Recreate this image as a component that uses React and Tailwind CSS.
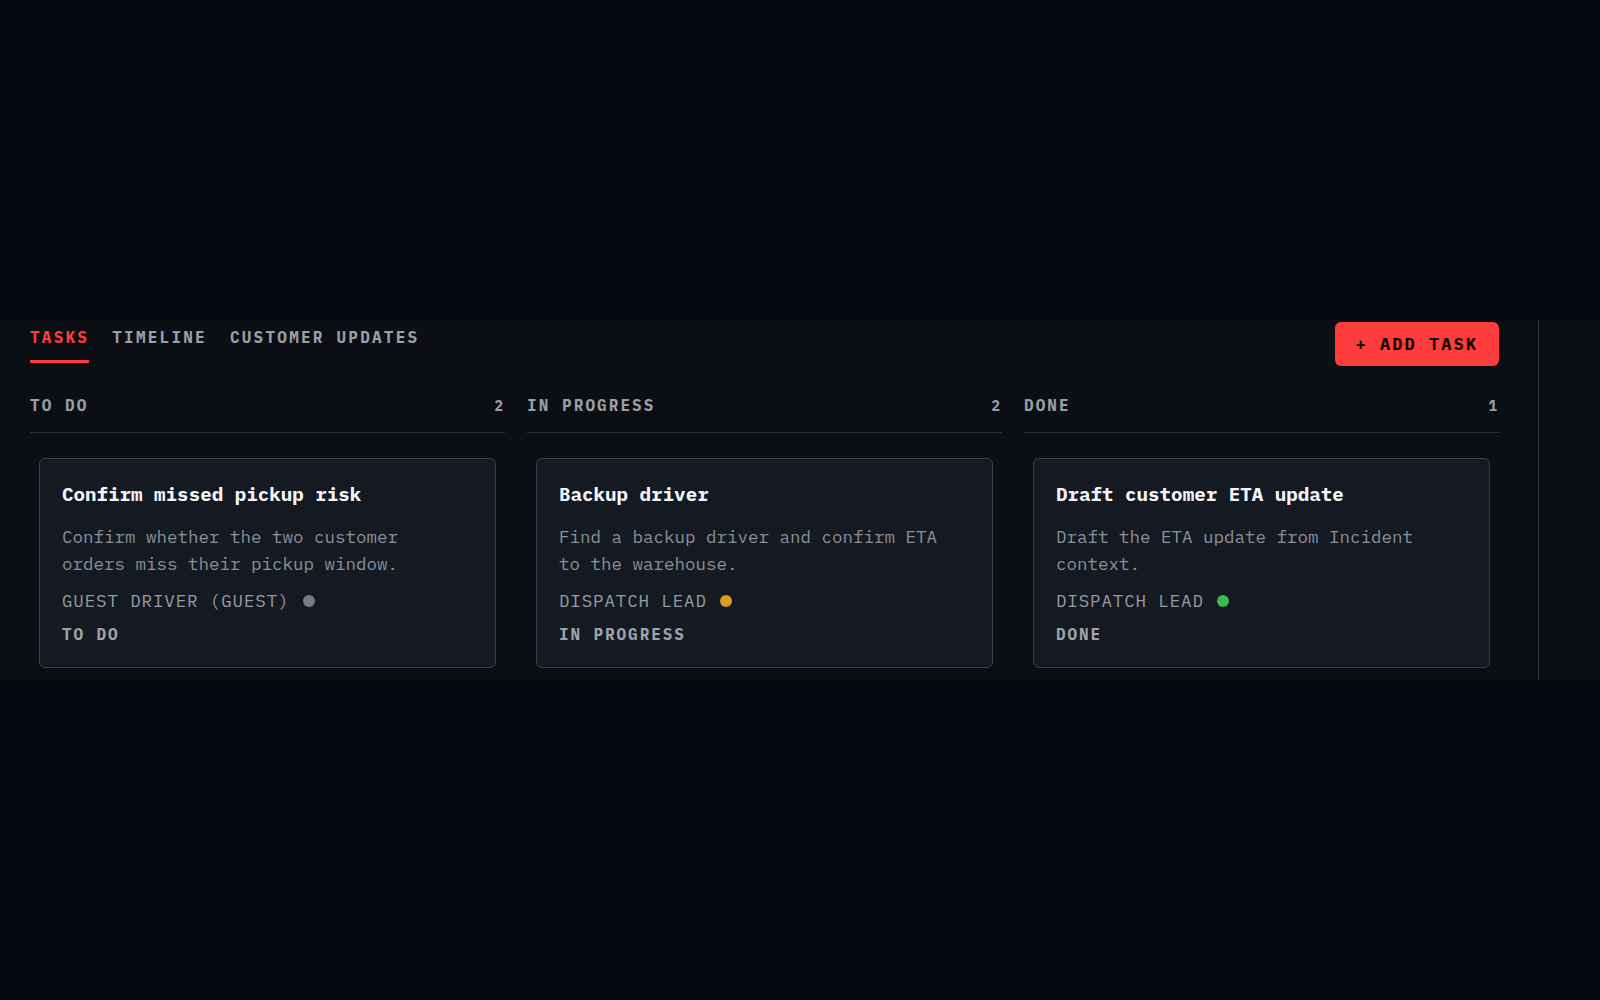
import React, { useState } from "react";

const tabs = ["TASKS", "TIMELINE", "CUSTOMER UPDATES"];

const columns = [
  {
    name: "TO DO",
    count: 2,
    tasks: [
      {
        title: "Confirm missed pickup risk",
        body: "Confirm whether the two customer orders miss their pickup window.",
        owner: "GUEST DRIVER (GUEST)",
        dot: "bg-[#777c84]",
        status: "TO DO",
      },
    ],
  },
  {
    name: "IN PROGRESS",
    count: 2,
    tasks: [
      {
        title: "Backup driver",
        body: "Find a backup driver and confirm ETA to the warehouse.",
        owner: "DISPATCH LEAD",
        dot: "bg-[#dd9d1c]",
        status: "IN PROGRESS",
      },
    ],
  },
  {
    name: "DONE",
    count: 1,
    tasks: [
      {
        title: "Draft customer ETA update",
        body: "Draft the ETA update from Incident context.",
        owner: "DISPATCH LEAD",
        dot: "bg-[#3dba4e]",
        status: "DONE",
      },
    ],
  },
];

const TaskCard = ({ task }) => {
  return (
    <div className="mx-[9px] rounded-md border border-[#3a3f48] bg-[#151a22] px-[22px] pt-[21px] pb-[21px]">
      <h3 className="text-[19.2px] leading-[28px] font-bold text-[#f4f5f7]">
        {task.title}
      </h3>
      <p className="mt-[15px] max-w-[400px] text-[17.5px] leading-[27px] text-[#8b9098]">
        {task.body}
      </p>
      <div className="mt-[12px] flex items-center gap-[13px] text-[17.5px] leading-[24px] tracking-[0.05em] text-[#979ba3]">
        <span>{task.owner}</span>
        <span className={`h-[12px] w-[12px] rounded-full ${task.dot}`}></span>
      </div>
      <div className="mt-[9px] text-[16px] leading-[24px] font-bold tracking-[0.12em] text-[#9ea2a9]">
        {task.status}
      </div>
    </div>
  );
};

const App = () => {
  const [active, setActive] = useState("TASKS");

  return (
    <div className="min-h-screen bg-[#060910] pt-[320px] font-['IBM_Plex_Mono','DejaVu_Sans_Mono',monospace]">
      <div className="flex bg-[#0b0e13]">
        <div className="flex-1 border-r border-[#30343b] pl-[30px] pr-[39px] pb-[12px]">
          <div className="flex items-start justify-between">
            <div className="flex gap-[23px] pt-[5px]">
              {tabs.map((tab) => (
                <button
                  key={tab}
                  onClick={() => setActive(tab)}
                  className={
                    active === tab
                      ? "border-b-[3px] border-[#ff3b3b] pb-[11px] text-[16px] leading-[24px] font-bold tracking-[0.14em] text-[#ff3b3b]"
                      : "border-b-[3px] border-transparent pb-[11px] text-[16px] leading-[24px] font-bold tracking-[0.14em] text-[#9a9ea5]"
                  }
                >
                  {tab}
                </button>
              ))}
            </div>
            <button className="mt-[2px] rounded-md bg-[#fe3c3c] px-[21px] py-[10px] text-[17px] leading-[24px] font-bold tracking-[0.12em] text-[#160707]">
              + ADD TASK
            </button>
          </div>

          <div className="mt-[27px] grid grid-cols-3 gap-[22px]">
            {columns.map((col) => (
              <div key={col.name}>
                <div className="flex items-baseline justify-between border-b border-[#2c3037] pb-[15px]">
                  <span className="text-[16px] leading-[24px] font-bold tracking-[0.13em] text-[#9a9ea5]">
                    {col.name}
                  </span>
                  <span className="pr-[2px] text-[14px] font-bold text-[#9a9ea5]">
                    {col.count}
                  </span>
                </div>
                <div className="pt-[25px]">
                  {col.tasks.map((task) => (
                    <TaskCard key={task.title} task={task} />
                  ))}
                </div>
              </div>
            ))}
          </div>
        </div>
        <div className="w-[61px]"></div>
      </div>
    </div>
  );
};

export default App;
